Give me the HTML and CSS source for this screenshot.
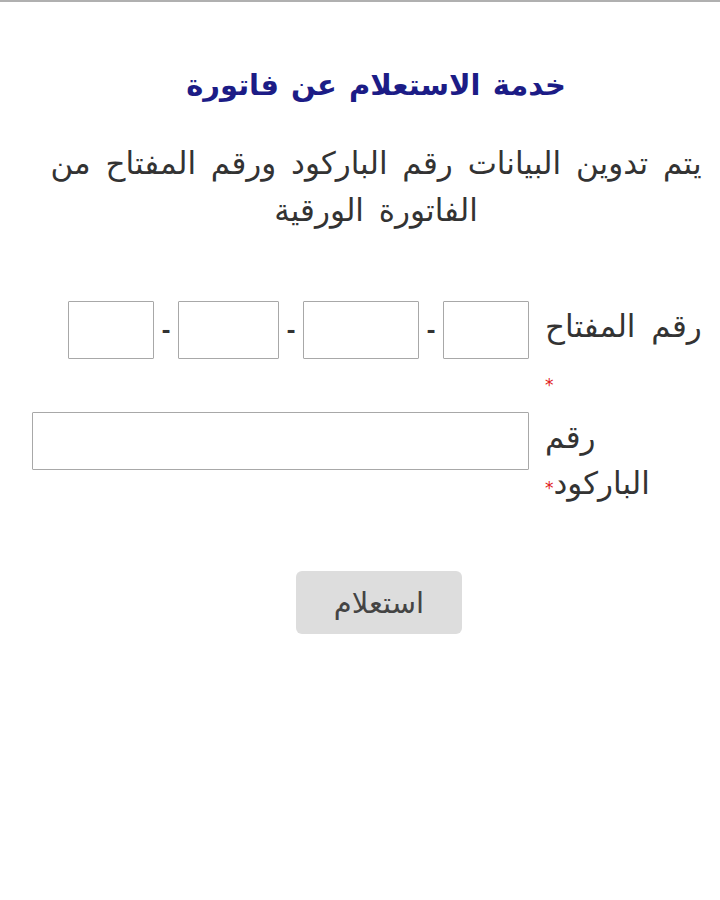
FILE: index.html
```html
<!DOCTYPE html>
<html lang="ar" dir="rtl">
<head>
<meta charset="utf-8">
<title>خدمة الاستعلام عن فاتورة</title>
<link rel="stylesheet" href="styles.css">
</head>
<body>
<div class="page">
  <h1 class="title">خدمة الاستعلام عن فاتورة</h1>
  <p class="intro">يتم تدوين البيانات رقم الباركود ورقم المفتاح من الفاتورة الورقية</p>
  <form class="form">
    <div class="row row-key">
      <label class="label"><span class="line">رقم المفتاح</span><span class="line"><span class="req req-drop">*</span></span></label>
      <div class="key-inputs">
        <input class="box w85" type="text">
        <span class="dash">-</span>
        <input class="box w115" type="text">
        <span class="dash">-</span>
        <input class="box w100" type="text">
        <span class="dash">-</span>
        <input class="box w85" type="text">
      </div>
    </div>
    <div class="row row-barcode">
      <label class="label"><span class="line">رقم</span><span class="line">الباركود<span class="req">*</span></span></label>
      <input class="box wide" type="text">
    </div>
    <div class="actions">
      <button class="btn" type="button">استعلام</button>
    </div>
  </form>
</div>
</body>
</html>
```
FILE: styles.css
```css
html, body {
  margin: 0;
  padding: 0;
  background: #ffffff;
}
body {
  border-top: 2px solid #b0b0b0;
  font-family: "DejaVu Sans", "Noto Sans", sans-serif;
  color: #333333;
}
.page {
  padding: 0 6px 0 32px;
}
.title {
  margin: 63px 0 0 6px;
  text-align: center;
  font-size: 29px;
  font-weight: bold;
  word-spacing: 2px;
  color: #1c1c86;
  line-height: 40px;
}
.intro {
  margin: 35px 0 0 6px;
  text-align: center;
  font-size: 31px;
  word-spacing: 5px;
  line-height: 47px;
  color: #333333;
}
.form {
  margin-top: 67px;
}
.row {
  display: flex;
  align-items: flex-start;
  gap: 16px;
  padding-right: 2px;
}
.label {
  width: 167px;
  flex: none;
  font-size: 31px;
  word-spacing: 6px;
  line-height: 46px;
  color: #333333;
  margin-top: 2px;
  text-align: left;
}
.line {
  display: block;
}
.req {
  color: #e02020;
  font-size: 17px;
}
.req-drop {
  vertical-align: -8px;
  line-height: 20px;
}
.key-inputs {
  display: flex;
  align-items: center;
  flex: none;
}
.box {
  box-sizing: border-box;
  flex: none;
  height: 58px;
  border: 1px solid #a8a8a8;
  border-radius: 1px;
  background: #ffffff;
  margin: 0;
  padding: 0 6px;
  font: inherit;
}
.w85 { width: 86px; }
.w100 { width: 101px; }
.w115 { width: 116px; }
.wide { width: 497px; }
.dash {
  width: 24px;
  text-align: center;
  font-size: 22px;
  font-weight: bold;
  color: #333333;
}
.row-barcode {
  margin-top: 17px;
}
.actions {
  margin-top: 60px;
  display: flex;
  justify-content: center;
  padding-left: 12px;
}
.btn {
  width: 166px;
  height: 63px;
  border: none;
  border-radius: 6px;
  background: #dddddd;
  color: #444444;
  font-family: inherit;
  font-size: 29px;
}
```
